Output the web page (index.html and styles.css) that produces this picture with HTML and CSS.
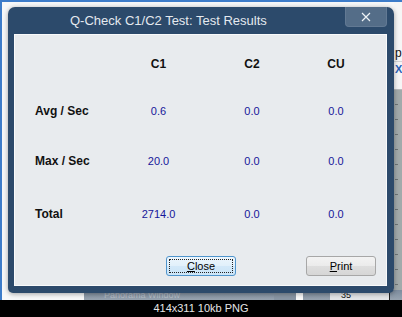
FILE: index.html
```html
<!DOCTYPE html>
<html lang="en">
<head>
    <meta charset="UTF-8">
    <meta name="viewport" content="width=device-width, initial-scale=1.0">
    <title>Q-Check C1/C2 Test: Test Results</title>
    <link rel="stylesheet" href="styles.css">
</head>
<body>
    <div class="screen">
        <div class="desk-right">
            <div class="dr-top">
                <span class="dr-line">p</span>
                <span class="dr-line dr-icon">X</span>
            </div>
            <div class="dr-ruler"></div>
        </div>
        <div class="desk-bottom">
            <span class="db-title">Panorama Window</span>
            <span class="db-arrow"></span>
            <span class="db-white"></span>
            <span class="db-gap"></span>
            <span class="db-box">35</span>
        </div>

        <div class="dialog">
            <div class="titlebar">
                <span class="title">Q-Check C1/C2 Test: Test Results</span>
                <button class="close-x" aria-label="Close">
                    <svg width="10" height="10" viewBox="0 0 10 10">
                        <path d="M1 1 L9 9 M9 1 L1 9" stroke="#eef2f6" stroke-width="1.2" fill="none"/>
                    </svg>
                </button>
            </div>
            <div class="panel">
                <div class="results">
                    <span></span>
                    <span class="head">C1</span>
                    <span class="head">C2</span>
                    <span class="head">CU</span>

                    <span class="label">Avg / Sec</span>
                    <span class="val">0.6</span>
                    <span class="val">0.0</span>
                    <span class="val">0.0</span>

                    <span class="label">Max / Sec</span>
                    <span class="val">20.0</span>
                    <span class="val">0.0</span>
                    <span class="val">0.0</span>

                    <span class="label">Total</span>
                    <span class="val">2714.0</span>
                    <span class="val">0.0</span>
                    <span class="val">0.0</span>
                </div>
                <div class="actions">
                    <button class="btn btn-default"><u>C</u>lose</button>
                    <button class="btn"><u>P</u>rint</button>
                </div>
            </div>
        </div>
    </div>
    <div class="caption">414x311 10kb PNG</div>
</body>
</html>
```

FILE: styles.css
```css
body {
    margin: 0;
    background-color: #000;
    font-family: "Liberation Sans", Arial, sans-serif;
}
.screen {
    position: relative;
    box-sizing: border-box;
    width: 402px;
    height: 300px;
    padding: 5px 0 0 6px;
    border-top: 2px solid #3d7cc9;
    border-left: 2px solid #3d7cc9;
    background-color: #f7f8f9;
    overflow: hidden;
}

/* bits of the windows behind the dialog */
.desk-right {
    position: absolute;
    top: 0;
    left: 392px;
    width: 8px;
    height: 100%;
    display: flex;
    flex-direction: column;
}
.dr-top {
    height: 88px;
    padding-top: 44px;
    box-sizing: border-box;
    background-color: #f6f6f6;
    border-bottom: 1px solid #b9bcbd;
}
.dr-line {
    display: block;
    height: 15px;
    padding-left: 1px;
    font-size: 12px;
    line-height: 14px;
    color: #111;
    border-bottom: 1px solid #d2d4d6;
}
.dr-icon {
    color: #2a62b8;
    font-size: 11px;
    font-weight: bold;
    border-bottom: none;
}
.dr-ruler {
    flex: 1;
    background:
        repeating-linear-gradient(to bottom, transparent 0 14px, #6e7576 14px 15px) no-repeat 1px 0 / 3px 100%,
        #a2aaab;
}
.desk-bottom {
    position: absolute;
    left: 82px;
    right: 0;
    bottom: 0;
    height: 10px;
    display: flex;
    background: linear-gradient(#7d8c9e, #97a3b0);
    overflow: hidden;
}
.db-title {
    width: 170px;
    padding-left: 20px;
    font-size: 9px;
    line-height: 10px;
    color: rgba(255, 255, 255, 0.35);
    white-space: nowrap;
}
.db-arrow {
    width: 22px;
    background-color: #8996a4;
}
.db-white {
    width: 7px;
    background-color: #fafafa;
}
.db-gap {
    width: 27px;
}
.db-box {
    width: 48px;
    padding-left: 11px;
    font-size: 9px;
    line-height: 10px;
    color: #111;
    background-color: #e4e6e8;
    border-right: 1px solid #222;
}

/* dialog */
.dialog {
    position: relative;
    z-index: 1;
    width: 386px;
    height: 286px;
    display: flex;
    flex-direction: column;
    background-color: #2c4a6b;
    border-radius: 7px 7px 5px 5px;
    box-shadow: 0 1px 5px rgba(0, 0, 0, 0.35);
}
.titlebar {
    display: flex;
    height: 27px;
}
.title {
    padding: 6px 0 0 62px;
    font-size: 13px;
    line-height: 16px;
    color: #e4e9ef;
}
.close-x {
    margin: 0 7px 0 auto;
    width: 42px;
    height: 20px;
    padding: 0;
    display: flex;
    align-items: center;
    justify-content: center;
    background-color: #546d88;
    border: 1px solid #627993;
    border-top: none;
    border-radius: 0 0 4px 4px;
}
.panel {
    flex: 1;
    margin: 0 7px 7px 6px;
    padding: 19px 10px 9px 20px;
    display: flex;
    flex-direction: column;
    background-color: #e8ebee;
    border: 1px solid #f9fafb;
}
.results {
    display: grid;
    grid-template-columns: 77px 93px 94px 74px;
    grid-template-rows: 47px 50px 53px 20px;
    line-height: 20px;
}
.results .head {
    text-align: center;
    font-size: 12px;
    font-weight: bold;
    color: #111;
}
.results .label {
    font-size: 12px;
    font-weight: bold;
    color: #111;
}
.results .val {
    text-align: center;
    font-size: 11px;
    color: #16169a;
}
.actions {
    margin-top: auto;
    display: flex;
    justify-content: flex-end;
    gap: 70px;
}
.btn {
    box-sizing: border-box;
    width: 70px;
    height: 20px;
    padding: 0;
    font-family: "Liberation Sans", Arial, sans-serif;
    font-size: 11px;
    color: #000;
    border: 1px solid #a7a7a7;
    border-radius: 3px;
    background: linear-gradient(#f3f3f3, #ebebeb 50%, #dedede 51%, #d6d6d6);
}
.btn-default {
    border-color: #4f94cc;
    background: linear-gradient(#edf6fd, #e1f0fb 50%, #d3e9f9 51%, #cbe4f7);
    outline: 1px dotted #222;
    outline-offset: -4px;
}
.caption {
    height: 17px;
    font-size: 11px;
    line-height: 17px;
    text-align: center;
    color: #e6e6e6;
}
```
